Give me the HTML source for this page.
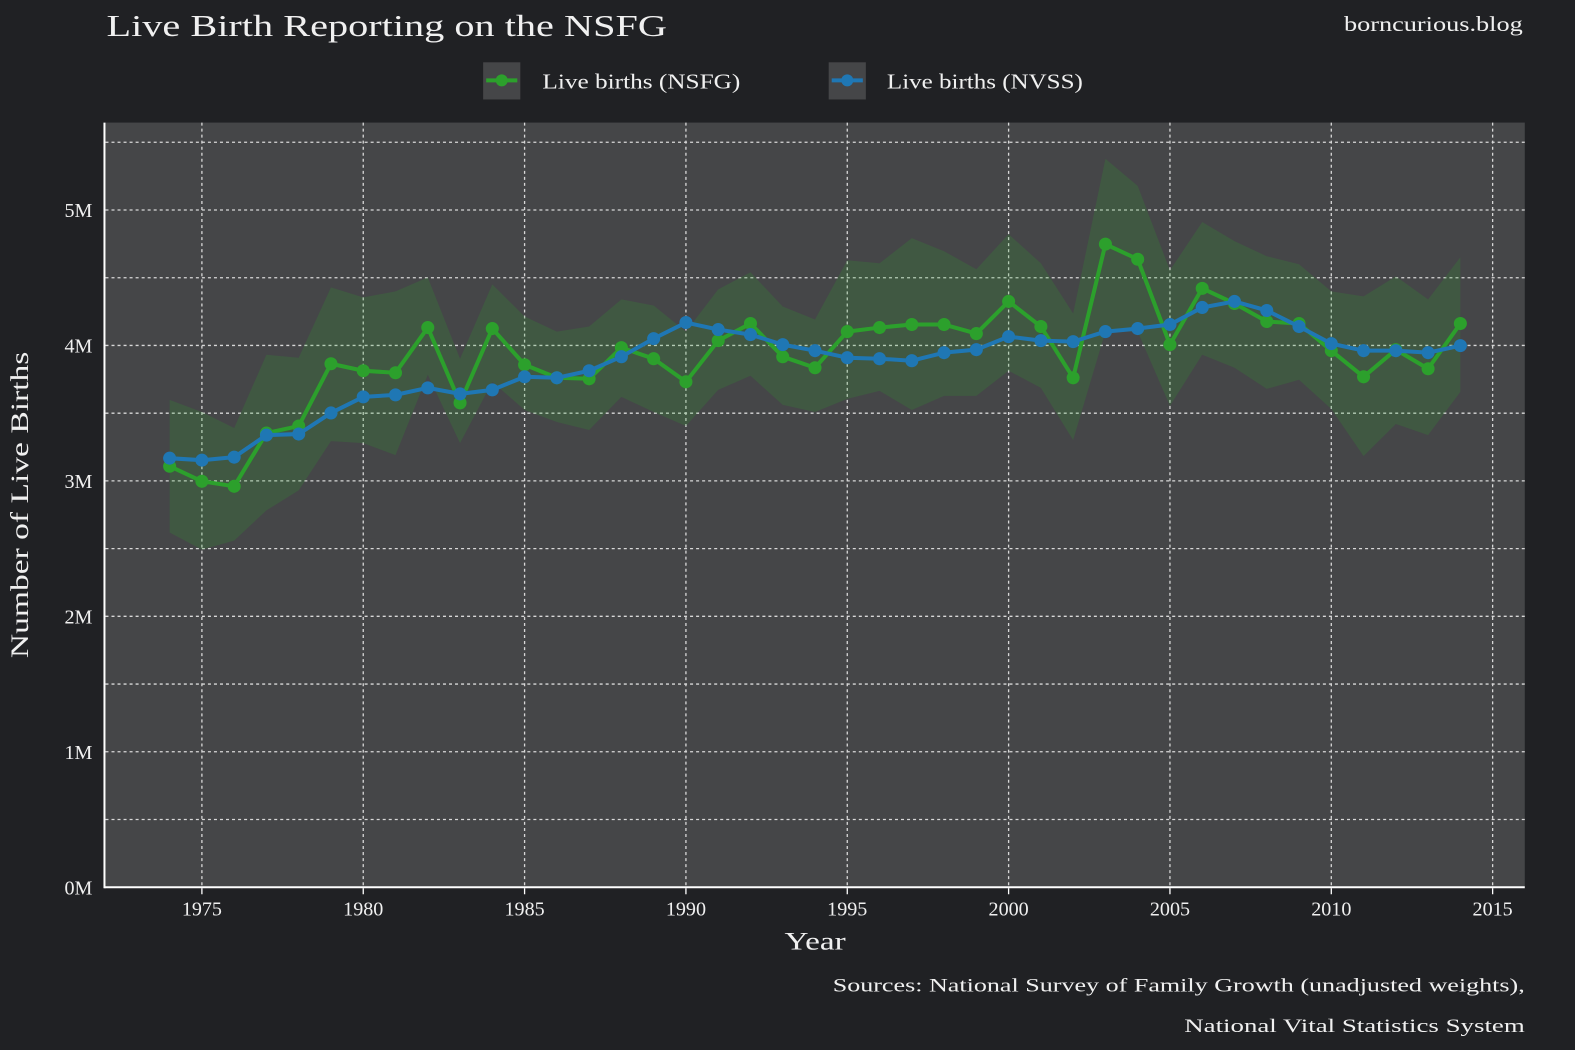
<!DOCTYPE html>
<html><head><meta charset="utf-8"><style>
html,body{margin:0;padding:0;background:#202124;}
svg{display:block;font-family:"Liberation Serif",serif;}
</style></head><body>
<svg id="s" width="1575" height="1050" viewBox="0 0 1568 1045" preserveAspectRatio="none" xmlns="http://www.w3.org/2000/svg">
<rect width="1568" height="1045" fill="#202124"/>
<text x="106" y="36" font-size="31" fill="#f0f0f0" textLength="558" lengthAdjust="spacingAndGlyphs">Live Birth Reporting on the NSFG</text>
<text x="1338" y="31" font-size="21" fill="#f0f0f0" textLength="178" lengthAdjust="spacingAndGlyphs">borncurious.blog</text>
<rect x="481" y="62" width="37" height="37" fill="#454648"/>
<line x1="484" y1="80" x2="515" y2="80" stroke="#2ca02c" stroke-width="4"/>
<circle cx="499.5" cy="80" r="6" fill="#2ca02c"/>
<text x="540" y="88" font-size="21" fill="#f0f0f0" textLength="197" lengthAdjust="spacingAndGlyphs">Live births (NSFG)</text>
<rect x="825" y="62" width="37" height="37" fill="#454648"/>
<line x1="828" y1="80" x2="859" y2="80" stroke="#1f77b4" stroke-width="4"/>
<circle cx="843.5" cy="80" r="6" fill="#1f77b4"/>
<text x="883" y="88" font-size="21" fill="#f0f0f0" textLength="195" lengthAdjust="spacingAndGlyphs">Live births (NVSS)</text>
<rect x="105" y="122" width="1413" height="761" fill="#454648"/>
<g id="grid" stroke="#d8d8d8" stroke-width="1.3" stroke-dasharray="3,3"></g>
<g id="data"></g>
<line x1="104" y1="122" x2="104" y2="884" stroke="#fff" stroke-width="2"/>
<line x1="104" y1="883" x2="1518" y2="883" stroke="#fff" stroke-width="2"/>
<g id="ticks" stroke="#fff" stroke-width="1.3"></g>
<g id="labels" font-size="20" fill="#f0f0f0"></g>
<text x="781" y="945" font-size="25" fill="#f0f0f0" textLength="61" lengthAdjust="spacingAndGlyphs">Year</text>
<text transform="translate(28,655) rotate(-90)" font-size="25" fill="#f0f0f0" textLength="305" lengthAdjust="spacingAndGlyphs">Number of Live Births</text>
<text x="829" y="987" font-size="19" fill="#f0f0f0" textLength="689" lengthAdjust="spacingAndGlyphs">Sources: National Survey of Family Growth (unadjusted weights),</text>
<text x="1179" y="1027" font-size="19" fill="#f0f0f0" textLength="339" lengthAdjust="spacingAndGlyphs">National Vital Statistics System</text>
</svg>
<script>
var NS="http://www.w3.org/2000/svg";
function X(y){return 201+(y-1975)*32.125;}
function el(t,a,p){var e=document.createElementNS(NS,t);for(var k in a)e.setAttribute(k,a[k]);p.appendChild(e);return e;}
var g=document.getElementById('grid'),lb=document.getElementById('labels'),d=document.getElementById('data'),tk=document.getElementById('ticks');
for(var i=1;i<=11;i++){var y=883-i*67.4;el('line',{x1:105,x2:1518,y1:y,y2:y},g);}
for(var yr=1975;yr<=2015;yr+=5){el('line',{x1:X(yr),x2:X(yr),y1:122,y2:883},g);
 el('line',{x1:X(yr),x2:X(yr),y1:884,y2:890},tk);
 var t=el('text',{x:X(yr),y:911,'text-anchor':'middle'},lb);t.textContent=yr;}
for(var m=0;m<=5;m++){var t=el('text',{x:92,y:890-m*134.8,'text-anchor':'end'},lb);t.textContent=m+'M';}
var ns=[464,479,484,431,424,362,369,371,326,401,327,363,376,377,346,357,380,339,322,355,366,330,326,323,323,332,300,325,376,243,258,343,287,302,320,322,349,375,348,367,322];
var nv=[456,458,455,433,432,411,395,393,386,392,388,375,376,369,355,337,321,328,333,343,349,356,357,359,351,348,335,339,340,330,327,323,306,300,309,325,342,349,349,351,344];
var up=[398,410,426,353,356,286,296,290,276,357,283,315,330,325,298,304,330,288,271,305,318,259,262,237,250,268,233,262,312,158,185,269,221,240,255,263,290,295,275,298,256];
var lo=[530,547,538,508,488,439,441,453,373,441,380,408,420,428,395,410,424,388,374,403,410,397,389,408,394,394,369,386,438,330,330,404,353,366,387,378,407,454,422,433,390];
var pts=[];for(i=0;i<41;i++)pts.push(X(1974+i)+','+up[i]);for(i=40;i>=0;i--)pts.push(X(1974+i)+','+lo[i]);
el('polygon',{points:pts.join(' '),fill:'#2ca02c','fill-opacity':0.2},d);
function line(a,c){var p=[];for(var i=0;i<41;i++)p.push(X(1974+i)+','+a[i]);
 el('polyline',{points:p.join(' '),fill:'none',stroke:c,'stroke-width':4,'stroke-linejoin':'round'},d);
 for(i=0;i<41;i++)el('circle',{cx:X(1974+i),cy:a[i],r:6.5,fill:c},d);}
line(ns,'#2ca02c');line(nv,'#1f77b4');
</script>
</body></html>
